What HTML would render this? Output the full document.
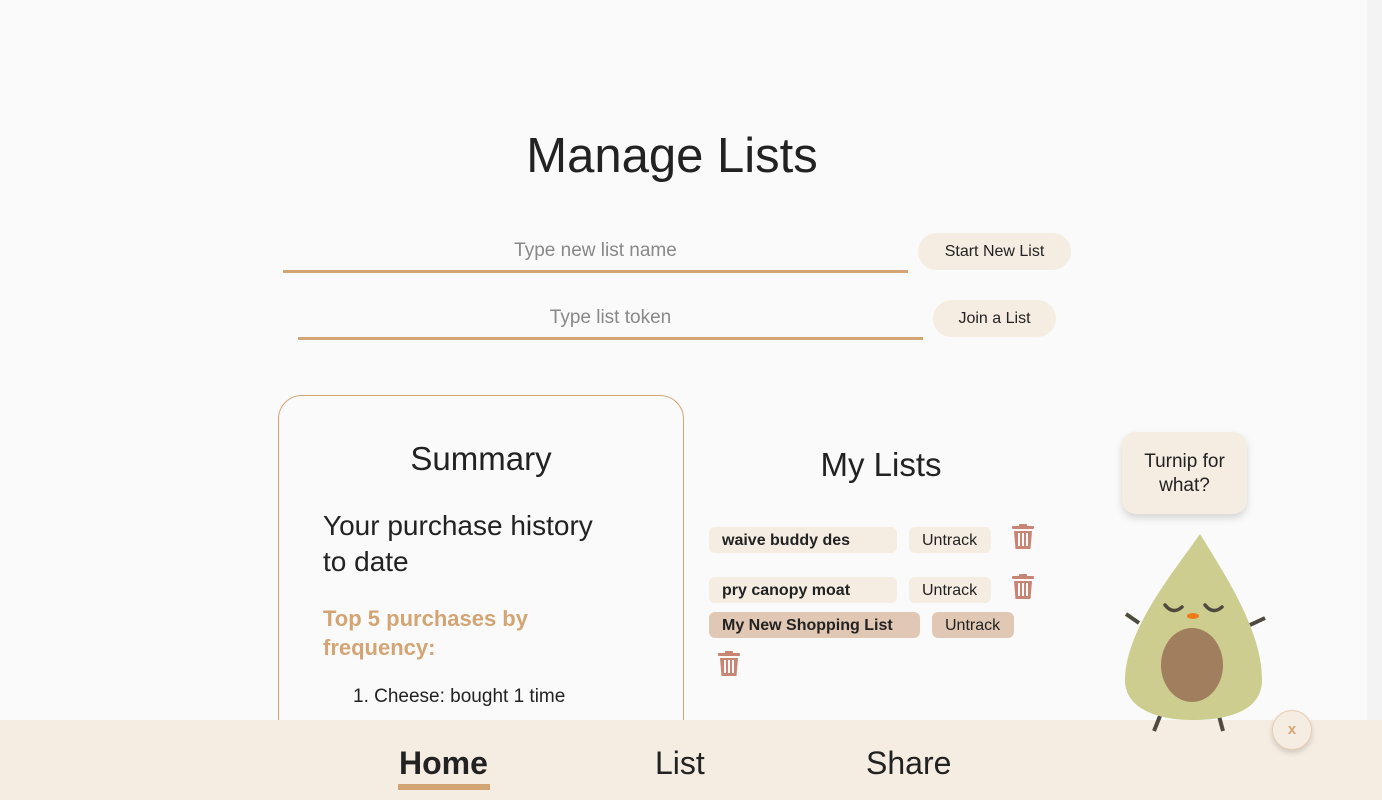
<!DOCTYPE html>
<html><head><style>
*{box-sizing:border-box;margin:0;padding:0}
body{width:1382px;height:800px;overflow:hidden;background:#fafafa;font-family:"Liberation Sans",sans-serif;color:#222;position:relative}
.abs{position:absolute}
h1{position:absolute;top:128px;left:0;width:1344px;text-align:center;font-weight:400;font-size:49px;color:#222}
.inp{position:absolute;height:42px;border-bottom:3px solid #d4a574;text-align:center;font-size:19px;color:#888;line-height:40px}
.btn{position:absolute;height:37px;background:#f5ede2;border-radius:19px;font-size:16px;line-height:38px;text-align:center;color:#222}
.card{position:absolute;left:278px;top:395px;width:406px;height:360px;border:1px solid #d4a574;border-radius:24px}
.tag{position:absolute;height:26px;border-radius:6px;font-size:16px;line-height:27px;padding-left:13px}
.b{font-weight:700}
.nav{position:absolute;left:0;top:720px;width:1382px;height:80px;background:#f5ede2}
.nav span{position:absolute;top:25px;font-size:32px}
</style></head><body>
<div class="abs" style="right:0;top:0;width:15px;height:720px;background:#f3f3f3"></div>
<h1>Manage Lists</h1>
<div class="inp" style="left:283px;top:231px;width:625px">Type new list name</div>
<div class="btn" style="left:918px;top:233px;width:153px">Start New List</div>
<div class="inp" style="left:298px;top:298px;width:625px">Type list token</div>
<div class="btn" style="left:933px;top:300px;width:123px">Join a List</div>
<div class="card">
<div class="abs" style="left:0;width:404px;top:44px;text-align:center;font-size:33px">Summary</div>
<div class="abs" style="left:44px;top:112px;width:300px;font-size:28px;line-height:36px">Your purchase history to date</div>
<div class="abs" style="left:44px;top:208px;width:320px;font-size:22px;line-height:29px;color:#d4a574;font-weight:700">Top 5 purchases by frequency:</div>
<div class="abs" style="left:74px;top:290px;font-size:19px">1. Cheese: bought 1 time</div>
</div>
<div class="abs" style="left:700px;width:362px;top:446px;text-align:center;font-size:33px">My Lists</div>
<div class="tag b" style="left:709px;top:527px;width:188px;background:#f5ede2">waive buddy des</div>
<div class="tag" style="left:909px;top:527px;width:82px;background:#f5ede2">Untrack</div>
<div class="tag b" style="left:709px;top:577px;width:188px;background:#f5ede2">pry canopy moat</div>
<div class="tag" style="left:909px;top:577px;width:82px;background:#f5ede2">Untrack</div>
<div class="tag b" style="left:709px;top:612px;width:211px;background:#e0c8b4">My New Shopping List</div>
<div class="tag" style="left:932px;top:612px;width:82px;background:#e0c8b4">Untrack</div>
<svg class="abs" style="left:1011px;top:524px" width="24" height="26" viewBox="0 0 24 26"><g fill="#c98573"><rect x="1" y="2" width="22" height="3" rx="1"/><rect x="8" y="0" width="8" height="3" rx="1"/><path d="M3 7h18l-1.5 18h-15z"/></g><g fill="#fafafa"><rect x="7" y="9" width="2" height="13"/><rect x="11" y="9" width="2" height="13"/><rect x="15" y="9" width="2" height="13"/></g></svg>
<svg class="abs" style="left:1011px;top:574px" width="24" height="26" viewBox="0 0 24 26"><g fill="#c98573"><rect x="1" y="2" width="22" height="3" rx="1"/><rect x="8" y="0" width="8" height="3" rx="1"/><path d="M3 7h18l-1.5 18h-15z"/></g><g fill="#fafafa"><rect x="7" y="9" width="2" height="13"/><rect x="11" y="9" width="2" height="13"/><rect x="15" y="9" width="2" height="13"/></g></svg>
<svg class="abs" style="left:717px;top:651px" width="24" height="26" viewBox="0 0 24 26"><g fill="#c98573"><rect x="1" y="2" width="22" height="3" rx="1"/><rect x="8" y="0" width="8" height="3" rx="1"/><path d="M3 7h18l-1.5 18h-15z"/></g><g fill="#fafafa"><rect x="7" y="9" width="2" height="13"/><rect x="11" y="9" width="2" height="13"/><rect x="15" y="9" width="2" height="13"/></g></svg>
<div class="nav">
<span class="b" style="left:399px">Home</span>
<div class="abs" style="left:398px;top:64px;width:92px;height:6px;background:#d4a574"></div>
<span style="left:655px">List</span>
<span style="left:866px">Share</span>
</div>
<div class="abs" style="left:1122px;top:432px;width:125px;height:82px;background:#f5ede2;border-radius:14px;box-shadow:0 4px 8px rgba(0,0,0,.15);text-align:center;font-size:19px;line-height:24px;padding-top:18px">Turnip for<br>what?</div>
<svg class="abs" style="left:1110px;top:530px" width="170" height="210" viewBox="1110 530 170 210">
<g stroke="#4f4a40" stroke-width="4"><line x1="1126" y1="614" x2="1139" y2="623"/><line x1="1250" y1="625" x2="1265" y2="618"/><line x1="1160" y1="716" x2="1154" y2="731"/><line x1="1219" y1="716" x2="1223" y2="731"/></g>
<path d="M1200 534 C1175 570 1125 630 1125 680 C1125 710 1160 720 1193 720 C1230 720 1262 710 1262 680 C1262 630 1225 575 1200 534Z" fill="#cccd8e"/>
<ellipse cx="1192" cy="665" rx="31" ry="37" fill="#a07e5e"/>
<g stroke="#4f4a40" stroke-width="3.5" fill="none" stroke-linecap="round"><path d="M1165 605q8 10 17 2"/><path d="M1205 605q8 10 17 2"/></g>
<ellipse cx="1193" cy="616" rx="6" ry="3" fill="#ef7a1a"/>
</svg>
<div class="abs" style="left:1272px;top:710px;width:40px;height:40px;border-radius:50%;background:#f5ede2;border:1px solid #e8cdb0;box-shadow:0 3px 6px rgba(0,0,0,.15);text-align:center;line-height:38px;color:#d4a574;font-weight:700;font-size:15px">x</div>
</body></html>
